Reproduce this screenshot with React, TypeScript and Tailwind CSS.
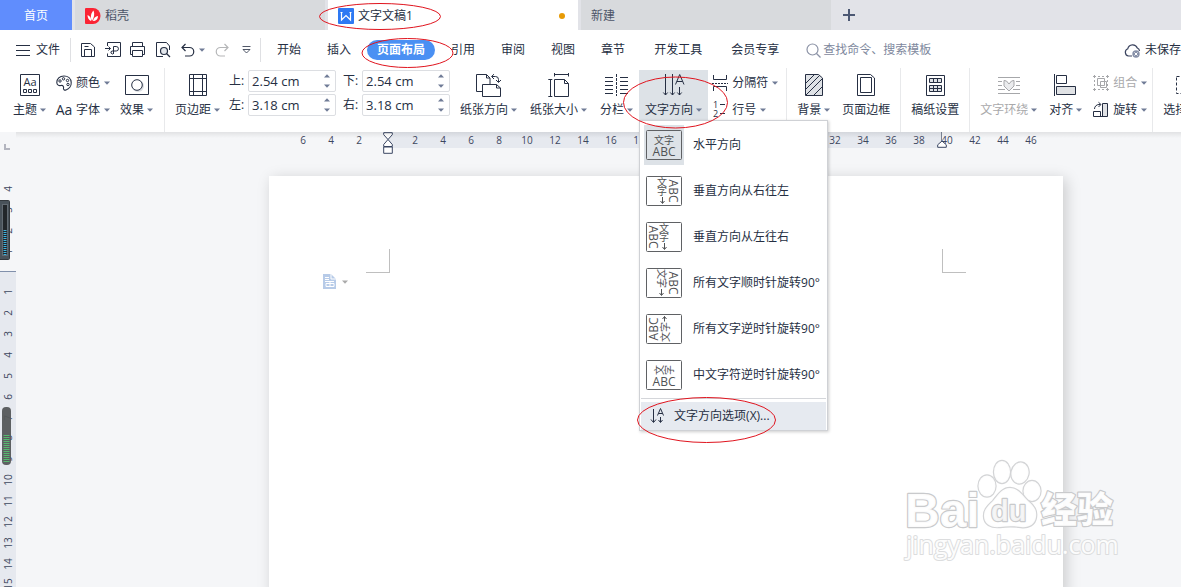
import type { ReactNode } from 'react';
import clsx from 'clsx';

const INK = '#262f43';

function Caret({ up = false, className }: { up?: boolean; className?: string }) {
  return (
    <svg width="6" height="4" viewBox="0 0 6 4" className={clsx('shrink-0', className)} aria-hidden="true">
      <path d={up ? 'M0 3.5h6L3 .3z' : 'M0 .5h6L3 3.7z'} fill="#6f7b96" />
    </svg>
  );
}

function Icon({ w, h, children, stroke = INK }: { w: number; h: number; children: ReactNode; stroke?: string }) {
  return (
    <svg
      width={w}
      height={h}
      viewBox={`0 0 ${w} ${h}`}
      fill="none"
      stroke={stroke}
      className="shrink-0 overflow-visible"
      aria-hidden="true"
    >
      {children}
    </svg>
  );
}

type ToolProps = { icon: ReactNode; label: string; caret?: boolean; muted?: boolean; active?: boolean };

function BigTool({ icon, label, caret = true, muted, active }: ToolProps) {
  return (
    <button
      type="button"
      className={clsx('flex h-[50px] shrink-0 flex-col items-center px-1.5', active && 'bg-[#dde2e7]')}
    >
      <span className="flex h-[30px] items-center">{icon}</span>
      <span className={clsx('flex h-5 items-center gap-[3px] whitespace-nowrap', muted && 'text-[#a9a9ab]')}>
        {label}
        {caret && <Caret />}
      </span>
    </button>
  );
}

function SmallTool({ icon, label, muted }: ToolProps) {
  return (
    <button type="button" className="flex h-6 items-center gap-1 whitespace-nowrap">
      <span className="flex w-4 justify-center">{icon}</span>
      <span className={clsx(muted && 'text-[#a9a9ab]')}>{label}</span>
      <Caret />
    </button>
  );
}

function Group({ children, first, last }: { children: ReactNode; first?: boolean; last?: boolean }) {
  return (
    <div
      className={clsx(
        'flex shrink-0 pt-0.5',
        first ? 'pl-[7px] pr-[5px]' : 'pl-1 pr-1',
        !last && 'border-r border-[#e8e9eb]',
      )}
    >
      {children}
    </div>
  );
}

function Margin({ id, label, value }: { id: string; label: string; value: string }) {
  return (
    <div className="flex h-[22px] items-center">
      <label htmlFor={id} className="w-[19px]">
        {label}
      </label>
      <div className="flex h-[22px] w-[88px] items-center rounded-xs border border-[#dcdee2] bg-white pr-[5px]">
        <input id={id} defaultValue={value} className="w-0 min-w-0 flex-1 bg-transparent pl-[3px] pt-0.5 text-[13px] outline-none" />
        <span className="flex flex-col gap-1.5">
          <button type="button" aria-label={`${label}+`} className="flex h-1">
            <Caret up />
          </button>
          <button type="button" aria-label={`${label}-`} className="flex h-1">
            <Caret />
          </button>
        </span>
      </div>
    </div>
  );
}

function Glyph({ x, y, size, turn = 0, children }: { x: number; y: number; size: number; turn?: number; children: string }) {
  return (
    <text
      x={x}
      y={y}
      fontSize={size}
      transform={`rotate(${turn} ${x} ${y})`}
      textAnchor="middle"
      dominantBaseline="central"
      fill="#505255"
      stroke="none"
    >
      {children}
    </text>
  );
}

function Orientation({ kind }: { kind: number }) {
  return (
    <svg width="38" height="32" viewBox="0 0 38 32" fill="none" stroke="#505255" aria-hidden="true">
      <rect x="1.5" y="1.5" width="35" height="29" rx="1" stroke="#5f6164" fill={kind === 0 ? 'none' : '#fff'} />
      {kind === 0 && (
        <>
          <Glyph x={19} y={11} size={10}>文字</Glyph>
          <Glyph x={19} y={22} size={12}>ABC</Glyph>
        </>
      )}
      {kind === 1 && (
        <>
          <Glyph x={17} y={7} size={10}>文</Glyph>
          <Glyph x={17} y={16} size={10}>字</Glyph>
          <path d="M17.500 22v6M15.500 26l2 2.500 2-2.500" />
          <Glyph x={28} y={16} size={12} turn={90}>ABC</Glyph>
        </>
      )}
      {kind === 2 && (
        <>
          <Glyph x={19} y={7} size={10}>文</Glyph>
          <Glyph x={19} y={16} size={10}>字</Glyph>
          <path d="M19.500 22v6M17.500 26l2 2.500 2-2.500" />
          <Glyph x={8} y={16} size={12} turn={90}>ABC</Glyph>
        </>
      )}
      {kind === 3 && (
        <>
          <Glyph x={17} y={7} size={10} turn={90}>文</Glyph>
          <Glyph x={17} y={16} size={10} turn={90}>字</Glyph>
          <path d="M16.500 22v6M14.500 26l2 2.500 2-2.500" />
          <Glyph x={28} y={16} size={12} turn={90}>ABC</Glyph>
        </>
      )}
      {kind === 4 && (
        <>
          <Glyph x={20} y={24} size={10} turn={-90}>文</Glyph>
          <Glyph x={20} y={14} size={10} turn={-90}>字</Glyph>
          <path d="M19.500 3.500v5M17.500 6l2-2.500 2 2.500" />
          <Glyph x={8} y={16} size={12} turn={-90}>ABC</Glyph>
        </>
      )}
      {kind === 5 && (
        <>
          <Glyph x={14} y={11} size={10} turn={-90}>文</Glyph>
          <Glyph x={24} y={11} size={10} turn={-90}>字</Glyph>
          <Glyph x={19} y={22} size={12}>ABC</Glyph>
        </>
      )}
    </svg>
  );
}

const directions = [
  '水平方向',
  '垂直方向从右往左',
  '垂直方向从左往右',
  '所有文字顺时针旋转90°',
  '所有文字逆时针旋转90°',
  '中文字符逆时针旋转90°',
];

function DirectionMenu() {
  return (
    <div
      role="menu"
      className="absolute left-0 top-full w-[189px] border border-[#cfd1d5] bg-white pt-px shadow-[1px_1px_3px_rgba(0,0,0,0.2)]"
    >
      {directions.map((name, i) => (
        <button key={name} type="button" role="menuitem" className="flex h-[46px] w-full items-center gap-[9px] pl-1 whitespace-nowrap">
          <span className={clsx('flex h-10 w-10 shrink-0 items-center justify-center', i === 0 && 'bg-[#dde2e7]')}>
            <Orientation kind={i} />
          </span>
          {name}
        </button>
      ))}
      <div className="mx-px mb-[3px] h-px bg-[#d4d6da]" />
      <button type="button" role="menuitem" className="mx-px flex h-7 w-[185px] items-center gap-2.5 bg-[#e6eaf0] pl-[9px] whitespace-nowrap">
        <Icon w={14} h={16}>
          <path d="M3.500 1v13M1 11.500l2.500 3 2.500-3M10.500 9v5M8.500 12l2 2.500 2-2.500M7.500 7.500l3-7 3 7M8.500 5.500h4" />
        </Icon>
        文字方向选项(X)...
      </button>
    </div>
  );
}

function TitleTabs() {
  return (
    <div className="flex h-[30px] shrink-0 items-stretch bg-[#e2e3e8]">
      <button type="button" className="w-[72px] shrink-0 bg-[#608dfd] pt-px text-white">首页</button>
      <button type="button" className="ml-[3px] flex w-[250px] shrink-0 items-center gap-1 bg-[#d8dadd] pl-[10px] pt-px text-[#4c5468]">
        <svg width="16" height="16" viewBox="0 0 16 16" aria-hidden="true">
          <path d="M1 0h7a7.500 8 0 0 1 0 16H1a1 1 0 0 1-1-1V1a1 1 0 0 1 1-1z" fill="#fb2434" />
          <path d="M7 13C5 9 6 5 8.500 2.500 10 6 9 10 7 13zM6 13C3.500 12 2.500 9.500 2.500 7 5 8 6.500 10 6 13zM8 13c.5-3 2.500-4.500 5-5 0 3-2 5-5 5z" fill="#fff" />
        </svg>
        稻壳
      </button>
      <button type="button" className="ml-[3px] flex w-[250px] shrink-0 items-center gap-1 bg-white pl-[10px] pr-[13px] pt-px">
        <svg width="16" height="16" viewBox="0 0 16 16" fill="none" aria-hidden="true">
          <rect width="16" height="16" rx="1" fill="#2e79f3" />
          <path d="M3.500 4v8l4.500-4.500 4.500 4.500V4M2.500 4.500h2M11.500 4.500h2" stroke="#fff" strokeWidth="1.200" />
        </svg>
        文字文稿1
        <span className="ml-auto h-1.5 w-1.5 rounded-full bg-[#e79a05]" />
      </button>
      <button type="button" className="ml-[3px] flex w-[250px] shrink-0 items-center bg-[#d8dadd] pl-[10px] pt-px text-[#4c5468]">新建</button>
      <button type="button" aria-label="+" className="flex w-9 items-center justify-center">
        <Icon w={12} h={12} stroke="#4c5873">
          <path d="M6 0v12M0 6h12" strokeWidth="2" />
        </Icon>
      </button>
    </div>
  );
}

function QuickBar() {
  return (
    <div className="flex shrink-0 items-center">
      <button type="button" className="flex items-center gap-1.5 pl-4 pr-2.5">
        <Icon w={14} h={11}>
          <path d="M0 .5h14M0 5.500h14M0 10.500h14" />
        </Icon>
        文件
      </button>
      <div className="flex h-6 items-center border-x border-[#dfe0e3] pl-[9px] pr-[9px]">
        <button type="button" aria-label="保存">
          <Icon w={16} h={16}>
            <path d="M1.500 1.500h9L14.500 5v9.500h-13zM4.500 14.500V7.500h7v7M4.500 4.500h4" />
          </Icon>
        </button>
        <button type="button" aria-label="输出为PDF" className="ml-[9px]">
          <Icon w={17} h={16}>
            <path d="M2.500 4V.5h13v14h-13v-3M0 6.500h5.500M3.500 4.500l2 2-2 2M8.500 12V4.500h2.700a2 2 0 0 1 0 4.500H7a1.500 1.500 0 1 0 1.500 2.500" />
          </Icon>
        </button>
        <button type="button" aria-label="打印" className="ml-2">
          <Icon w={15} h={16}>
            <path d="M2.500 4.500v-4h10v4M2.500 12.500h-2v-8h14v8h-2M2.500 8.500h10v6h-10z" />
          </Icon>
        </button>
        <button type="button" aria-label="打印预览" className="ml-[11px]">
          <Icon w={15} h={16}>
            <path d="M7 14.500H.5V.5h10l3 3.500v4" />
            <circle cx="8" cy="9" r="3.500" fill="#e3e7ec" strokeWidth="1.200" />
            <path d="M10.500 11.500l3.500 3.500" strokeWidth="1.300" />
          </Icon>
        </button>
        <button type="button" aria-label="撤销" className="ml-2.5 flex items-center gap-1">
          <Icon w={14} h={14}>
            <path d="M4.500 1L1 4.500 4.500 8M1 4.500h7.500a4 4 0 0 1 0 8.500H4" strokeWidth="1.200" />
          </Icon>
          <Caret />
        </button>
        <button type="button" aria-label="恢复" className="ml-2.5">
          <Icon w={14} h={14} stroke="#b5b6b8">
            <path d="M9.500 1L13 4.500 9.500 8M13 4.500H5.500a4 4 0 0 0 0 8.500H10" strokeWidth="1.200" />
          </Icon>
        </button>
        <button type="button" aria-label="更多" className="ml-[13px]">
          <Icon w={9} h={8}>
            <path d="M.5.5h8M1 3.500l3.500 3.500 3.500-3.500z" strokeWidth=".8" />
          </Icon>
        </button>
      </div>
    </div>
  );
}

const menus = ['引用', '审阅', '视图', '章节'];

function MenuRow() {
  return (
    <div className="flex h-[38px] shrink-0 items-center pt-0.5 whitespace-nowrap">
      <QuickBar />
      <nav className="flex shrink-0 items-center pl-[3px]">
        <button type="button" className="px-[13px]">开始</button>
        <button type="button" className="px-[13px]">插入</button>
        <button type="button" className="mx-[3px] h-5 rounded-full bg-[#4a90f3] px-2.5 font-bold text-white">页面布局</button>
        {menus.map((m) => (
          <button key={m} type="button" className="px-[13px]">{m}</button>
        ))}
        <button type="button" className="px-4">开发工具</button>
        <button type="button" className="px-[13px]">会员专享</button>
      </nav>
      <label className="ml-3.5 flex shrink-0 items-center gap-0.5">
        <Icon w={15} h={15} stroke="#8c93a6">
          <circle cx="6.500" cy="6.500" r="5.500" strokeWidth="1.200" />
          <path d="M10.500 10.500l4 4" strokeWidth="1.300" />
        </Icon>
        <input aria-label="搜索" placeholder="查找命令、搜索模板" className="w-[112px] bg-transparent outline-none placeholder:text-[#7e889d]" />
      </label>
      <button type="button" className="ml-auto flex shrink-0 items-center gap-1">
        <Icon w={17} h={15}>
          <path d="M8 13H4.500a3.800 3.800 0 0 1-.7-7.300A5 5 0 0 1 13.300 5 3.500 3.500 0 0 1 15.500 8" stroke="#3c4560" strokeWidth="1.200" />
          <circle cx="12" cy="11" r="3.700" fill="#8790a8" stroke="none" />
          <path d="M10.500 9.500l3 3M13.500 9.500l-3 3" stroke="#fff" />
        </Icon>
        未保存
      </button>
    </div>
  );
}

function Ribbon() {
  return (
    <div className="flex h-16 shrink-0">
      <Group first>
        <BigTool
          label="主题"
          icon={
            <Icon w={20} h={22}>
              <path d="M.5.5h19v21H.5z" />
              <path d="M3.500 15.500h3v3h-3zM8.500 15.500h3v3h-3zM13.500 15.500h3v3h-3z" />
              <text x="10" y="12" fontSize="11" textAnchor="middle" fill={INK} stroke="none">Aa</text>
            </Icon>
          }
        />
        <div className="flex flex-col gap-[3px] px-1 pt-px">
          <SmallTool
            label="颜色"
            icon={
              <Icon w={16} h={16}>
                <path d="M8 1C3.500 1 .8 4 .8 7.500c0 2.500 2.200 3.500 4.200 3 2-.4 3 1 2.500 2.500-.4 1.500 1 2.500 2.500 2 3-1 5.500-4 5.200-7.500C15 3.500 12 1 8 1z" strokeWidth="1.100" />
                <circle cx="4" cy="6" r="1.200" />
                <circle cx="7.500" cy="3.800" r="1.200" />
                <circle cx="11.500" cy="5.500" r="1.200" />
                <circle cx="12" cy="9.500" r="1.200" />
              </Icon>
            }
          />
          <SmallTool label="字体" icon={<span className="text-[14px]">Aa</span>} />
        </div>
        <BigTool
          label="效果"
          icon={
            <Icon w={24} h={20}>
              <path d="M.5.5h23v19H.5z" />
              <circle cx="13" cy="11" r="6" fill="#dcdfe4" stroke="none" />
              <circle cx="12" cy="10" r="5.300" fill="#fff" />
            </Icon>
          }
        />
      </Group>

      <Group>
        <BigTool
          label="页边距"
          icon={
            <Icon w={18} h={22}>
              <path d="M.5.5h17v21H.5zM4.500 0v22M13.500 0v22M0 4.500h18M0 17.500h18" />
            </Icon>
          }
        />
        <div className="flex gap-[7px] px-[3px]">
          <div className="flex flex-col gap-0.5">
            <Margin id="top" label="上:" value="2.54 cm" />
            <Margin id="left" label="左:" value="3.18 cm" />
          </div>
          <div className="flex flex-col gap-0.5">
            <Margin id="bottom" label="下:" value="2.54 cm" />
            <Margin id="right" label="右:" value="3.18 cm" />
          </div>
        </div>
        <div className="flex gap-px pl-px">
          <BigTool
            label="纸张方向"
            icon={
              <Icon w={25} h={25}>
                <path d="M6.500 18.500h-6v-17h10l3.500 3.500V11M6.500 11.500h14l4 3.500v8.500h-18zM10.500 1.500V5H14M20.500 11.500V15h4M16 3.500h3.500a3 3 0 0 1 3 3V9M18 1.200l-2.500 2.300L18 6M20 7l2.500 2.500L25 7" />
              </Icon>
            }
          />
          <BigTool
            label="纸张大小"
            icon={
              <Icon w={21} h={24}>
                <path d="M6.500 6.500h10l4 4v13h-14zM16.500 6.500v4h4M6 1.500h15M6.500 0v3.500M20.500 0v3.500M2.500 6v17.500M.3 6.500h4M.3 23.500h4" />
              </Icon>
            }
          />
          <BigTool
            label="分栏"
            icon={
              <Icon w={23} h={22}>
                <path d="M0 3.500h8M0 7.500h8M0 11.500h8M0 15.500h8M0 19.500h8M15 3.500h8M15 7.500h8M15 11.500h8M15 15.500h8M15 19.500h8" />
                <path d="M11.500 0v22" strokeDasharray="3 1" />
              </Icon>
            }
          />
        </div>
        <div className="relative z-20 h-[50px]">
          <BigTool
            active
            label="文字方向"
            icon={
              <Icon w={22} h={22}>
                <path d="M2.500 0v21M9.500 0v21M16.500 13v8M.3 18.500l2.200 2.500 2.200-2.500M7.300 18.500l2.200 2.500 2.200-2.500M14.300 18.500l2.200 2.500 2.200-2.500M12.500 10.500L16.700.5 21 10.500M14 7.500h5.500" />
              </Icon>
            }
          />
          <DirectionMenu />
        </div>
        <div className="flex flex-col gap-[3px] px-1 pt-px">
          <SmallTool
            label="分隔符"
            icon={
              <Icon w={16} h={16}>
                <path d="M1.500 0v4.500h13V0M1.500 16v-4.500h13V16" />
                <path d="M0 8.500h16" strokeDasharray="2 1" />
              </Icon>
            }
          />
          <SmallTool
            label="行号"
            icon={
              <Icon w={16} h={16}>
                <text x="1" y="6" fontSize="9" fill={INK} stroke="none">1</text>
                <text x="1" y="15" fontSize="9" fill={INK} stroke="none">2</text>
                <path d="M8 2.500h5M8 11.500h5" />
              </Icon>
            }
          />
        </div>
      </Group>

      <Group>
        <BigTool
          label="背景"
          icon={
            <Icon w={18} h={22}>
              <path d="M.5.5h13l4 3.500v17.500H.5z" fill="#dfe2e6" />
              <path d="M1 9l8-8M1 15L14.500 1.500M1 21L17 5M9 21l8-8" />
            </Icon>
          }
        />
        <BigTool
          label="页面边框"
          caret={false}
          icon={
            <Icon w={18} h={22}>
              <path d="M.5.5h13l4 3.500v17.500H.5zM3.500 3.500h11v15h-11z" />
            </Icon>
          }
        />
      </Group>

      <Group>
        <BigTool
          label="稿纸设置"
          caret={false}
          icon={
            <Icon w={19} h={22}>
              <path d="M.5 1.500h18v20H.5z" />
              <path d="M3.500 4.500h12v4h-12zM3.500 11.500h12v6h-12zM7.500 4.500v4M11.500 4.500v4M3.500 14.500h12M7.500 11.500v6M11.500 11.500v6" fill="#dfe2e6" />
            </Icon>
          }
        />
      </Group>

      <Group>
        <BigTool
          muted
          label="文字环绕"
          icon={
            <Icon w={22} h={20} stroke="#a6a7aa">
              <path d="M0 2.500h22M0 6.500h4M18 6.500h4M0 10.500h4M18 10.500h4M0 14.500h7M15 14.500h7M0 18.500h22" />
              <path d="M6 5.500l2.500.5L11 9l2.500-3 2.500-.5V11l-5 5-5-5z" fill="#ebecee" />
            </Icon>
          }
        />
        <BigTool
          label="对齐"
          icon={
            <Icon w={23} h={22}>
              <path d="M.5 0v22M2.500 1.500h10v8h-10z" />
              <path d="M2.500 12.500h19v8h-19z" fill="#e0e2e5" />
            </Icon>
          }
        />
        <div className="flex flex-col gap-[3px] pl-[5px] pr-px pt-px">
          <SmallTool
            muted
            label="组合"
            icon={
              <Icon w={16} h={16} stroke="#a6a7aa">
                <path d="M4.500 3.500h7v7h-7zM7.500 6.500h6v6h-6z" />
                <path d="M0 1.500h3M1.500 0v3M13 1.500h3M14.500 0v3M0 14.500h3M1.500 13v3M13 14.500h3M14.500 13v3" />
                <path d="M5 1.500h6M1.500 5v6M5 14.500h6M14.500 5v6" strokeDasharray="2 2" />
              </Icon>
            }
          />
          <SmallTool
            label="旋转"
            icon={
              <Icon w={16} h={16}>
                <path d="M.5 9.500h7v5h-7z" />
                <path d="M9.500 1.500h5v13h-5z" fill="#e0e2e5" />
                <path d="M1.500 7A4.500 4.500 0 0 1 6 2.500h1.500M5.500.3L8 2.500 5.500 5M7 14.500h3" />
              </Icon>
            }
          />
        </div>
      </Group>

      <Group last>
        <BigTool
          label="选择窗格"
          caret={false}
          icon={
            <Icon w={22} h={20}>
              <path d="M.5 1.500h20v17H.5z" strokeDasharray="3 2" />
            </Icon>
          }
        />
      </Group>
    </div>
  );
}

const across = [6, 4, 2, 0, ...Array.from({ length: 23 }, (_, i) => (i + 1) * 2)];

function HorizontalRuler() {
  return (
    <div className="relative ml-[273px] flex h-4 text-[10px] text-[#3d475e]">
      <div className="absolute inset-y-0 left-[99px] w-[554px] bg-[#e6e9ef]" />
      {across.map((n, i) => (
        <span key={i} className="relative flex w-7 shrink-0 items-center justify-center leading-4">
          {n !== 0 && n}
        </span>
      ))}
      <svg className="absolute left-[94px] top-0" width="10" height="22" viewBox="0 0 10 22" fill="#fff" stroke="#3b4763" aria-hidden="true">
        <path d="M.7.700h8.600v2L5 7.500.7 2.700zM.7 14.500v-2L5 7.500l4.300 5v2zM.7 15h8.600v6.300H.7z" />
      </svg>
      <svg className="absolute left-[648px] top-0" width="10" height="17" viewBox="0 0 10 17" fill="#fff" stroke="#3b4763" aria-hidden="true">
        <path d="M4.500 0v9" stroke="#7d8596" />
        <path d="M.7 15.300v-2.500L5 9l4.300 3.800v2.500z" />
      </svg>
    </div>
  );
}

function Turned({ n }: { n: number }) {
  return (
    <span className="flex min-h-0 flex-1 items-center justify-center">
      <span className="-rotate-90 leading-none">{n}</span>
    </span>
  );
}

function VerticalRuler() {
  return (
    <div className="relative flex w-4 shrink-0 flex-col text-[10px] text-[#3d475e]">
      <div className="ml-1 mt-3 h-1.5 w-1.5 border-b-2 border-l-2 border-[#b3b5bf]" />
      <div className="mt-7 flex h-[84px] flex-col">
        {[4, 3, 2, 1].map((n) => (
          <Turned key={n} n={n} />
        ))}
      </div>
      <div className="mt-[9px] border-t border-[#8190ab] bg-[#e6e9ef] pt-[10px]">
        <div className="flex h-[313px] flex-col">
          {Array.from({ length: 15 }, (_, i) => (
            <Turned key={i} n={i + 1} />
          ))}
        </div>
      </div>
      <svg className="absolute left-0 top-[68px]" width="11" height="60" viewBox="0 0 11 60" aria-hidden="true">
        <rect x="-1" y=".5" width="10.500" height="59" rx="1" fill="#49525a" stroke="#33383d" />
        <rect x="2" y="4" width="6" height="52" fill="#626a72" />
        <rect x="3" y="5" width="4" height="50" fill="#22262a" />
        <path d="M5 30v25" stroke="#3fb4e0" strokeWidth="3" strokeDasharray="1 1" />
      </svg>
      <svg className="absolute left-0.5 top-[275px]" width="9" height="58" viewBox="0 0 9 58" aria-hidden="true">
        <rect width="9" height="58" rx="4" fill="#55585a" fillOpacity="0.95" />
        <path d="M4.500 28v28" stroke="#57b870" strokeWidth="6" strokeDasharray="1 1" />
      </svg>
    </div>
  );
}

function Watermark() {
  return (
    <svg
      className="absolute left-[885px] top-[324px]"
      width="220"
      height="115"
      viewBox="0 0 220 115"
      fill="#fff"
      stroke="#d3d4d6"
      strokeWidth="2.400"
      strokeLinejoin="round"
      aria-hidden="true"
    >
      <g paintOrder="stroke" fillOpacity="0.95">
        <text x="4" y="71" fontSize="48" fontWeight="bold" fontFamily="Liberation Sans, sans-serif" stroke="#c9cacc" paintOrder="stroke">Bai</text>
        <ellipse cx="86" cy="30" rx="8.500" ry="10.500" paintOrder="stroke" />
        <ellipse cx="101" cy="16" rx="8" ry="11" paintOrder="stroke" />
        <ellipse cx="119" cy="17" rx="8.500" ry="10.500" transform="rotate(12 119 17)" paintOrder="stroke" />
        <ellipse cx="131" cy="35" rx="8.500" ry="10" paintOrder="stroke" />
        <path d="M109 32c8 0 12 7 18 13 6 5 9 9 8 16-1 8-8 11-15 10-7-1-14-1-21 0-9 1-16-3-16-11 0-7 4-10 9-15 5-6 9-13 17-13z" paintOrder="stroke" />
        <text x="90" y="65" fontSize="29" fontWeight="bold" fontFamily="Liberation Sans, sans-serif" fill="#f6f6f6" stroke="#c9cacc" paintOrder="stroke">du</text>
        <text x="140" y="67" fontSize="36" fontWeight="900" fontFamily="Noto Sans CJK SC, sans-serif" stroke="#c9cacc" paintOrder="stroke">经验</text>
        <text x="5" y="98" fontSize="25" fontFamily="Open Sans, sans-serif" strokeWidth="2" stroke="#dcddde" paintOrder="stroke">jingyan.baidu.com</text>
      </g>
    </svg>
  );
}

function Workspace() {
  return (
    <main className="flex h-[455px] flex-1 overflow-hidden bg-[#f5f6f8]">
      <VerticalRuler />
      <div className="relative flex min-w-0 flex-1 flex-col">
        <HorizontalRuler />
        <div className="ml-[253px] mt-7 w-[794px] flex-1 bg-white shadow-[3px_3px_14px_rgba(0,0,0,0.18)]">
          <div className="flex justify-between px-[97px] pt-[73px]">
            <span className="h-6 w-6 border-b border-r border-[#bfbfbf]" />
            <span className="h-6 w-6 border-b border-l border-[#bfbfbf]" />
          </div>
          <button type="button" aria-label="段落" className="ml-[54px] mt-px flex items-center gap-1.5">
            <svg width="13" height="15" viewBox="0 0 13 15" aria-hidden="true">
              <path d="M0 0h8l5 5v10H0z" fill="#b7cbe8" />
              <path d="M8 0v5h5M2 3.500h4M2 5.500h4M2 7.500h9M3 9.500h8v3H3zM7 8v5" fill="none" stroke="#fff" />
            </svg>
            <svg width="6" height="4" viewBox="0 0 6 4" aria-hidden="true">
              <path d="M0 .5h6L3 3.700z" fill="#aaaaaa" />
            </svg>
          </button>
        </div>
        <div className="absolute inset-x-0 top-0 h-1.5 bg-linear-to-b from-black/8 to-transparent" />
        <Watermark />
      </div>
    </main>
  );
}

function Annotations() {
  return (
    <svg className="pointer-events-none absolute left-0 top-0 z-30" width="800" height="460" viewBox="0 0 800 460" fill="none" stroke="#e0141e" aria-hidden="true">
      <ellipse cx="380" cy="16.500" rx="60.500" ry="13" />
      <ellipse cx="407.500" cy="53" rx="45.500" ry="14.500" />
      <ellipse cx="675.500" cy="102.500" rx="52" ry="25.500" />
      <ellipse cx="706.500" cy="420" rx="69" ry="22.500" />
    </svg>
  );
}

export default function App() {
  return (
    <div className="relative flex min-h-screen flex-col overflow-hidden bg-white font-['Open_Sans','Noto_Sans_CJK_SC',sans-serif] text-xs text-[#262f43]">
      <TitleTabs />
      <MenuRow />
      <Ribbon />
      <Workspace />
      <Annotations />
    </div>
  );
}
